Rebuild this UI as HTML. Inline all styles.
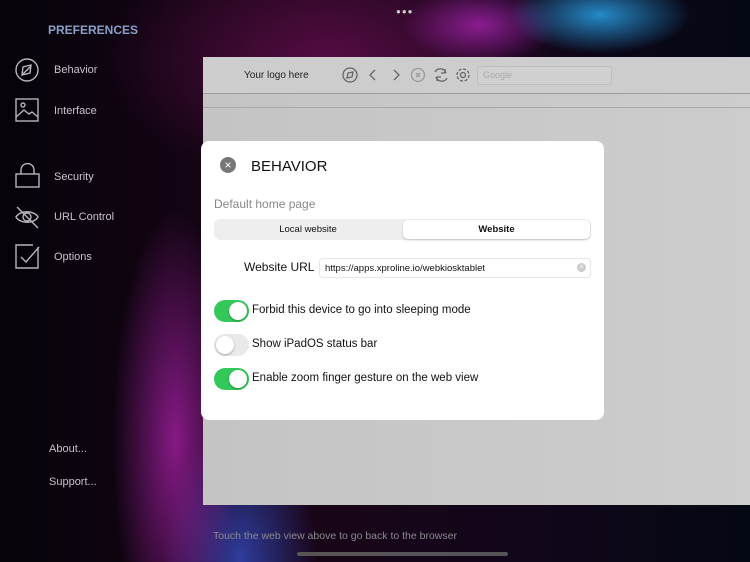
<!DOCTYPE html>
<html><head><meta charset="utf-8"><style>
*{margin:0;padding:0;box-sizing:border-box}
body{width:750px;height:562px;overflow:hidden;position:relative;font-family:"Liberation Sans",sans-serif;background:#0a0510}
.bg{position:absolute;inset:0;background:
radial-gradient(ellipse 90px 330px at 175px 440px, rgba(210,40,210,.6), transparent 70%),
radial-gradient(ellipse 110px 200px at 240px 560px, rgba(60,90,230,.65), transparent 70%),
radial-gradient(ellipse 130px 55px at 600px 15px, rgba(40,160,230,.85), transparent 70%),
radial-gradient(ellipse 110px 55px at 480px 25px, rgba(190,40,200,.65), transparent 70%),
radial-gradient(ellipse 330px 180px at 330px 60px, rgba(110,15,85,.7), transparent 70%),
linear-gradient(90deg,#06030a,#1a0518 40%,#12061a 70%,#040814)}
.t{position:absolute;color:#c9c4cc;font-size:11px}
.ic{position:absolute;stroke:#b8b4bc;fill:none;stroke-width:1.4}
.panel{position:absolute;left:203px;top:57px;width:547px;height:448px;background:linear-gradient(90deg,#c4c4c4,#c9c9c9 60%,#cdcdcd)}
.tb{position:absolute;left:0;top:0;width:100%;height:37px;background:#cdcdcd;border-bottom:1px solid #9c9c9c}
.dlg{position:absolute;left:201px;top:141px;width:403px;height:279px;background:#fff;border-radius:8px}
.tog{position:absolute;left:13px;width:35px;height:22px;border-radius:11px;background:#34c759}
.tog::after{content:"";position:absolute;top:2px;right:2px;width:18px;height:18px;border-radius:50%;background:#fff;box-shadow:0 1px 2px rgba(0,0,0,.3)}
.tog.off{background:#e9e9eb}.tog.off::after{right:auto;left:2px}
.lbl{position:absolute;left:51px;font-size:11.5px;color:#111}
</style></head><body>
<div class="bg"></div>
<div style="position:absolute;left:396px;top:7px;color:#ccc;font-size:8px;letter-spacing:1px">●●●</div>
<div class="t" style="left:48px;top:23px;font-size:12px;font-weight:bold;color:#8aa0c8">PREFERENCES</div>
<svg class="ic" style="left:14px;top:57px" width="26" height="26"><circle cx="13" cy="13" r="11"/><path d="M17 8L9 10 8 18 16 16Z M9 17L17 9"/></svg>
<div class="t" style="left:54px;top:64px">Behavior</div>
<svg class="ic" style="left:15px;top:98px" width="25" height="25"><rect x="1" y="1" width="22" height="22"/><circle cx="8" cy="7" r="2"/><path d="M1 19L9 12 14 16 17 14 23 19"/></svg>
<div class="t" style="left:54px;top:105px">Interface</div>
<svg class="ic" style="left:15px;top:163px" width="25" height="26"><path d="M6 11V7a6.5 6.5 0 0 1 13 0v4"/><rect x="1" y="11" width="23" height="13"/></svg>
<div class="t" style="left:54px;top:171px">Security</div>
<svg class="ic" style="left:14px;top:204px" width="26" height="26"><path d="M2 13C6 6 20 6 24 13 20 20 6 20 2 13Z"/><circle cx="13" cy="13" r="4"/><path d="M3 3L24 24"/></svg>
<div class="t" style="left:54px;top:211px">URL Control</div>
<svg class="ic" style="left:15px;top:244px" width="26" height="26"><path d="M23 3V24H1V1H18"/><path d="M6 13L11 18 24 3"/></svg>
<div class="t" style="left:54px;top:251px">Options</div>
<div class="t" style="left:49px;top:443px">About...</div>
<div class="t" style="left:49px;top:476px">Support...</div>
<div class="panel">
<div class="tb">
<div style="position:absolute;left:41px;top:13px;font-size:10px;color:#222">Your logo here</div>
<svg style="position:absolute;left:138px;top:9px" width="130" height="20" fill="none" stroke="#666" stroke-width="1.3">
<circle cx="9" cy="9" r="7"/><path d="M12 6L7 7 6 12 11 11Z"/>
<path d="M34 4L29 9 34 14"/><path d="M53 4L58 9 53 14"/>
<circle cx="77" cy="9" r="6.5" stroke="#999"/><path d="M75 7L79 11M79 7L75 11" stroke="#999"/>
<path d="M94 6a6 6 0 0 1 11 1M106 12a6 6 0 0 1-11-1M104 3v4h-4M96 15v-4h4"/>
<circle cx="122" cy="9" r="2.5"/><circle cx="122" cy="9" r="6" stroke-dasharray="3 1.7"/>
</svg>
<div style="position:absolute;left:274px;top:9px;width:135px;height:19px;border:1px solid #bdbdbd;border-radius:3px;background:#d0d0d0;font-size:9px;color:#aaa;padding:3px 5px">Google</div>
</div>
<div style="position:absolute;left:0;top:50px;width:100%;border-top:1px solid #a8a8a8"></div>
</div>
<div class="dlg">
<div style="position:absolute;left:19px;top:16px;width:16px;height:16px;border-radius:50%;background:#777;color:#fff;font-size:12px;text-align:center;line-height:16px">×</div>
<div style="position:absolute;left:50px;top:17px;font-size:15px;color:#111">BEHAVIOR</div>
<div style="position:absolute;left:13px;top:56px;font-size:12px;color:#888">Default home page</div>
<div style="position:absolute;left:13px;top:78px;width:377px;height:21px;background:#eeeeef;border-radius:6px"></div>
<div style="position:absolute;left:13px;top:83px;width:188px;text-align:center;font-size:9.5px;color:#111">Local website</div>
<div style="position:absolute;left:202px;top:79px;width:187px;height:19px;background:#fff;border-radius:5px;box-shadow:0 1px 2px rgba(0,0,0,.2);text-align:center;font-size:9.5px;font-weight:bold;line-height:19px;color:#111">Website</div>
<div style="position:absolute;left:43px;top:119px;font-size:12px;color:#111">Website URL</div>
<div style="position:absolute;left:118px;top:117px;width:272px;height:20px;border:1px solid #e6e6e6;border-radius:4px;font-size:9.5px;color:#111;padding:4px 5px">https://apps.xproline.io/webkiosktablet</div>
<div style="position:absolute;left:376px;top:122px;width:9px;height:9px;border-radius:50%;background:#ccc;color:#fff;font-size:7px;line-height:9px;text-align:center">×</div>
<div class="tog" style="top:159px"></div><div class="lbl" style="top:163px">Forbid this device to go into sleeping mode</div>
<div class="tog off" style="top:193px"></div><div class="lbl" style="top:197px">Show iPadOS status bar</div>
<div class="tog" style="top:227px"></div><div class="lbl" style="top:231px">Enable zoom finger gesture on the web view</div>
</div>
<div class="t" style="left:213px;top:530px;color:#8a8a8e;font-size:10.5px">Touch the web view above to go back to the browser</div>
<div style="position:absolute;left:297px;top:552px;width:211px;height:4px;border-radius:2px;background:#555"></div>
</body></html>
